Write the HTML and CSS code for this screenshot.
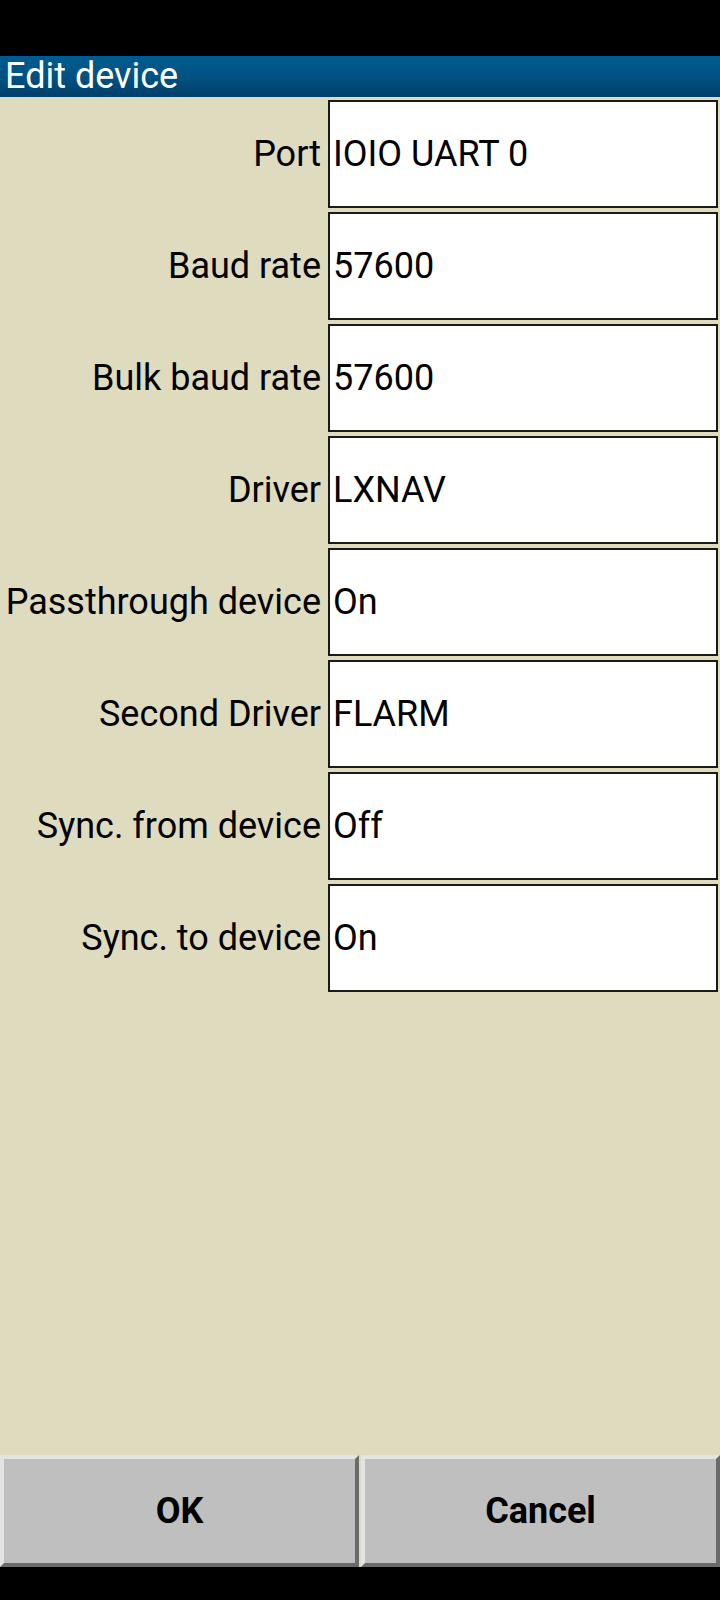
FILE: index.html
```html
<!DOCTYPE html>
<html>
<head>
<meta charset="utf-8">
<link rel="stylesheet" href="styles.css">
</head>
<body>
<div class="screen">
  <div class="statusbar"></div>
  <div class="titlebar">Edit device</div>
  <div class="content">
    <div class="rows">
      <div class="row"><div class="label">Port</div><div class="field">IOIO UART 0</div></div>
      <div class="row"><div class="label">Baud rate</div><div class="field">57600</div></div>
      <div class="row"><div class="label">Bulk baud rate</div><div class="field">57600</div></div>
      <div class="row"><div class="label">Driver</div><div class="field">LXNAV</div></div>
      <div class="row"><div class="label">Passthrough device</div><div class="field">On</div></div>
      <div class="row"><div class="label">Second Driver</div><div class="field">FLARM</div></div>
      <div class="row"><div class="label">Sync. from device</div><div class="field">Off</div></div>
      <div class="row"><div class="label">Sync. to device</div><div class="field">On</div></div>
    </div>
    <div class="buttons">
      <div class="btn">OK</div>
      <div class="btn">Cancel</div>
    </div>
  </div>
  <div class="navbar"></div>
</div>
</body>
</html>
```
FILE: styles.css
```css
html, body {
  margin: 0;
  padding: 0;
  background: #000;
}
.screen {
  width: 720px;
  height: 1600px;
  display: flex;
  flex-direction: column;
  font-family: Roboto, "Liberation Sans", sans-serif;
  color: #000;
}
.statusbar {
  height: 56px;
  background: #000;
  flex: none;
}
.titlebar {
  height: 41px;
  flex: none;
  background: linear-gradient(to bottom, #005b90 0%, #005283 50%, #003e69 100%);
  color: #fff;
  font-size: 36px;
  line-height: 41px;
  padding-left: 5px;
}
.content {
  flex: 1;
  background: #dedbbf;
  display: flex;
  flex-direction: column;
  justify-content: space-between;
}
.rows {
  display: flex;
  flex-direction: column;
  gap: 4px;
  padding-top: 3px;
}
.row {
  display: flex;
  align-items: center;
  height: 108px;
}
.label {
  width: 328px;
  text-align: right;
  font-size: 36px;
  padding-right: 7px;
  box-sizing: border-box;
  white-space: nowrap;
}
.field {
  width: 390px;
  height: 108px;
  box-sizing: border-box;
  border: 2px solid #1a1a1a;
  background: #fff;
  font-size: 36px;
  display: flex;
  align-items: center;
  padding-left: 3px;
}
.buttons {
  display: flex;
  gap: 2px;
  height: 112px;
}
.btn {
  flex: 1;
  box-sizing: border-box;
  background: #bfbfbf;
  border-top: 4px solid #e4e4e4;
  border-left: 4px solid #e4e4e4;
  border-bottom: 4px solid #6b6b6b;
  border-right: 4px solid #6b6b6b;
  display: flex;
  align-items: center;
  justify-content: center;
  font-weight: bold;
  font-size: 36px;
}
.navbar {
  height: 33px;
  flex: none;
  background: #000;
}
```
